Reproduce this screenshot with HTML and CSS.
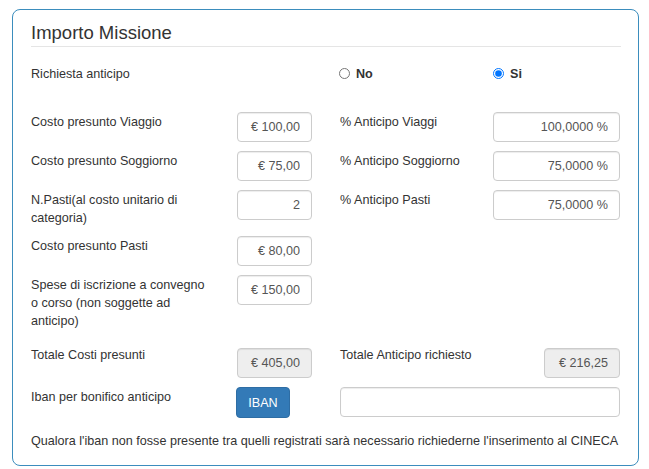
FILE: index.html
```html
<!DOCTYPE html>
<html lang="it">
<head>
    <meta charset="UTF-8">
    <title>Importo Missione</title>
    <link rel="stylesheet" href="styles.css">
</head>
<body>
    <div class="panel">
        <h3 class="titolo">Importo Missione</h3>

        <div class="riga riga-radio">
            <label class="etichetta">Richiesta anticipo</label>
            <label class="radio col-3"><input type="radio" name="anticipo" value="no"> No</label>
            <label class="radio col-4"><input type="radio" name="anticipo" value="si" checked> Si</label>
        </div>

        <div class="riga">
            <label class="etichetta">Costo presunto Viaggio</label>
            <input class="campo" type="text" value="€ 100,00">
            <label class="etichetta destra">% Anticipo Viaggi</label>
            <input class="campo" type="text" value="100,0000 %">
        </div>

        <div class="riga">
            <label class="etichetta">Costo presunto Soggiorno</label>
            <input class="campo" type="text" value="€ 75,00">
            <label class="etichetta destra">% Anticipo Soggiorno</label>
            <input class="campo" type="text" value="75,0000 %">
        </div>

        <div class="riga">
            <label class="etichetta">N.Pasti(al costo unitario di categoria)</label>
            <input class="campo" type="text" value="2">
            <label class="etichetta destra">% Anticipo Pasti</label>
            <input class="campo" type="text" value="75,0000 %">
        </div>

        <div class="riga">
            <label class="etichetta">Costo presunto Pasti</label>
            <input class="campo" type="text" value="€ 80,00">
        </div>

        <div class="riga">
            <label class="etichetta">Spese di iscrizione a convegno o corso (non soggette ad anticipo)</label>
            <input class="campo" type="text" value="€ 150,00">
        </div>

        <div class="riga riga-totali">
            <label class="etichetta">Totale Costi presunti</label>
            <input class="campo totale" type="text" value="€ 405,00" readonly>
            <label class="etichetta destra">Totale Anticipo richiesto</label>
            <input class="campo totale stretto" type="text" value="€ 216,25" readonly>
        </div>

        <div class="riga">
            <label class="etichetta">Iban per bonifico anticipo</label>
            <button class="btn-iban">IBAN</button>
            <input class="campo iban" type="text" value="">
        </div>

        <p class="nota">Qualora l'iban non fosse presente tra quelli registrati sarà necessario richiederne l'inserimento al CINECA</p>
    </div>
</body>
</html>
```

FILE: styles.css
```css
body {
    margin: 0;
    padding: 0;
    background-color: #fff;
    font-family: "Liberation Sans", Arial, sans-serif;
    font-size: 12.6px;
    line-height: 18px;
    color: #333;
}
.panel {
    width: 627px;
    box-sizing: border-box;
    margin: 9px 0 0 12px;
    padding: 12px 17px 15px 18px;
    border: 1px solid #3b8dbd;
    border-radius: 8px;
}
.titolo {
    margin: 0 0 17px 0;
    padding-bottom: 2px;
    font-size: 18.5px;
    line-height: 22px;
    font-weight: normal;
    border-bottom: 1px solid #e5e5e5;
}
.riga {
    display: grid;
    grid-template-columns: 206px 75px 181px 127px;
    align-items: start;
    margin-bottom: 9px;
}
.riga-radio {
    margin-bottom: 29px;
    align-items: center;
}
.riga-totali {
    margin-top: 15px;
}
.etichetta {
    display: block;
    padding-top: 1px;
    padding-right: 26px;
}
.destra {
    padding-left: 28px;
    padding-right: 0;
}
.radio {
    display: flex;
    align-items: center;
    padding-top: 0;
    font-weight: bold;
}
.radio input {
    width: 11px;
    height: 11px;
    margin: 0 6px 0 0;
}
.col-3 {
    grid-column: 3;
    margin-left: 27px;
}
.col-4 {
    grid-column: 4;
}
.campo {
    width: 100%;
    height: 30px;
    box-sizing: border-box;
    padding: 6px 11px;
    border: 1px solid #ccc;
    border-radius: 4px;
    font-family: inherit;
    font-size: 12.6px;
    color: #555;
    text-align: right;
    box-shadow: inset 0 1px 1px rgba(0, 0, 0, 0.075);
}
.totale {
    margin-top: 3px;
    background-color: #eee;
}
.stretto {
    width: 76px;
    justify-self: end;
}
.iban {
    grid-column: 3 / 5;
    margin-left: 28px;
    width: auto;
}
.btn-iban {
    justify-self: start;
    width: 54px;
    height: 31px;
    margin-left: -1px;
    padding: 0;
    background-color: #337ab7;
    border: 1px solid #2e6da4;
    border-radius: 4px;
    color: #fff;
    font-family: inherit;
    font-size: 12.6px;
    cursor: pointer;
}
.nota {
    margin: 14px 0 0 0;
}
```
